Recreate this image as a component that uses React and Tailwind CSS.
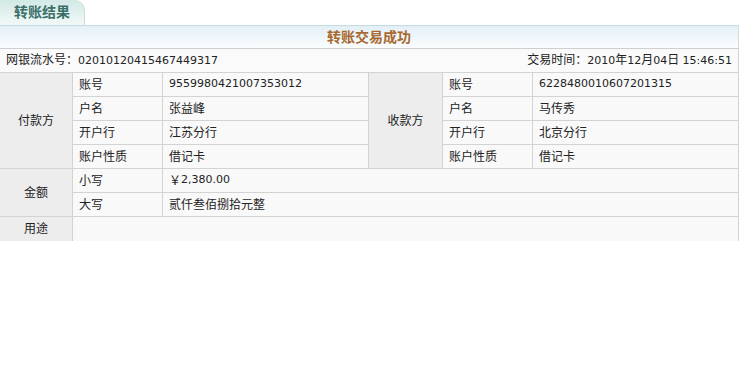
import React from "react";

const num = "font-['DejaVu_Sans',sans-serif] text-[11px]";

const Cell = ({ children, className = "" }) => (
  <div
    className={`flex items-center border-r border-b border-[#d3d3d3] bg-[#f9f9f9] px-[6px] ${className}`}
  >
    {children}
  </div>
);

const Group = ({ children, rows }) => (
  <div
    className={`flex items-center justify-center border-r border-b border-[#d3d3d3] bg-[#ededed] ${rows}`}
  >
    {children}
  </div>
);

export default function App() {
  return (
    <div className="w-[741px] h-[384px] bg-white text-[12px] text-[#222] font-['Liberation_Sans','Noto_Sans_CJK_SC',sans-serif]">
      {/* tab */}
      <div className="h-[25px] flex items-end">
        <div className="h-[25px] w-[85px] rounded-tr-[10px] bg-gradient-to-b from-[#d2e9e5] to-[#f3f9f8] border-r border-[#c8dedb] flex items-center pl-[14px] text-[14px] font-bold text-[#3b6f69]">
          转账结果
        </div>
      </div>

      <div className="w-[739px]">
        {/* header */}
        <div className="h-[24px] border-t border-b border-r border-t-[#c5dbe2] border-b-[#cfcfcf] border-r-[#d8d8d8] bg-gradient-to-b from-[#e3eff6] to-[#fbfdfe] flex items-center justify-center text-[14px] font-bold text-[#a8692f]">
          转账交易成功
        </div>

        {/* serial row */}
        <div className="h-[24px] border-b border-r border-[#d3d3d3] bg-[#fafafa] flex items-center justify-between px-[6px]">
          <span>
            网银流水号：<span className={num}>02010120415467449317</span>
          </span>
          <span>
            交易时间：<span className={num}>2010</span>年<span className={num}>12</span>月<span className={num}>04</span>日 <span className={num}>15:46:51</span>
          </span>
        </div>

        {/* details */}
        <div className="grid grid-cols-[73px_90px_206px_74px_90px_206px] auto-rows-[24px]">
          <Group rows="row-span-4">付款方</Group>
          <Cell>账号</Cell>
          <Cell><span className={num}>9559980421007353012</span></Cell>
          <Group rows="row-span-4">收款方</Group>
          <Cell>账号</Cell>
          <Cell><span className={num}>6228480010607201315</span></Cell>

          <Cell>户名</Cell>
          <Cell>张益峰</Cell>
          <Cell>户名</Cell>
          <Cell>马传秀</Cell>

          <Cell>开户行</Cell>
          <Cell>江苏分行</Cell>
          <Cell>开户行</Cell>
          <Cell>北京分行</Cell>

          <Cell>账户性质</Cell>
          <Cell>借记卡</Cell>
          <Cell>账户性质</Cell>
          <Cell>借记卡</Cell>

          <Group rows="row-span-2">金额</Group>
          <Cell>小写</Cell>
          <Cell className="col-span-4">
            ￥<span className={num}>2,380.00</span>
          </Cell>
          <Cell>大写</Cell>
          <Cell className="col-span-4">贰仟叁佰捌拾元整</Cell>

          <div className="flex items-center justify-center border-r border-[#d3d3d3] bg-[#ededed]">
            用途
          </div>
          <div className="col-span-5 border-r border-[#d3d3d3] bg-[#f9f9f9]" />
        </div>
      </div>
    </div>
  );
}
